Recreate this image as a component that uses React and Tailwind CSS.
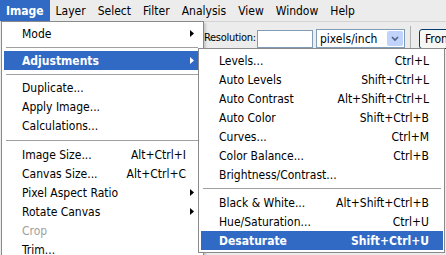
const font = { fontFamily: 'Tahoma, "DejaVu Sans Condensed", "DejaVu Sans", sans-serif' };

const topItems = ['Layer', 'Select', 'Filter', 'Analysis', 'View', 'Window', 'Help'];

function Arrow({ white }) {
  return (
    <svg width="4" height="7" viewBox="0 0 4 7" className="shrink-0 -mr-[8px]">
      <path d="M0 0 L4 3.5 L0 7 Z" fill={white ? '#ffffff' : '#000000'} />
    </svg>
  );
}

function Row({ label, keys, sub, active, disabled }) {
  return (
    <div
      className={`h-[19px] flex items-center pl-[18px] pr-[14px] ${active ? 'bg-[#316ac5] text-white font-bold' : disabled ? 'text-[#a0a0a0]' : 'text-black'}`}
    >
      <span className="flex-1 whitespace-nowrap">{label}</span>
      {keys && <span className="whitespace-nowrap">{keys}</span>}
      {sub && <Arrow white={active} />}
    </div>
  );
}

function Sep({ h = 'h-[8px]' }) {
  return (
    <div className={`${h} flex items-center px-[2px]`}>
      <div className="w-full h-px bg-[#a0a0a0]" />
    </div>
  );
}

export default function App() {
  return (
    <div className="w-[446px] h-[255px] relative overflow-hidden bg-[#ececec] text-[12px]" style={font}>
      {/* menu bar */}
      <div className="h-[21px] flex items-stretch bg-[#ececec]">
        <div className="bg-[#316ac5] text-white font-bold flex items-center px-[6px]">Image</div>
        {topItems.map((t) => (
          <div key={t} className="flex items-center px-[6px] text-black">{t}</div>
        ))}
      </div>

      {/* options toolbar */}
      <div className="h-[34px] flex items-center pl-[204px] border-t border-[#d4d4d4] overflow-hidden">
        <span className="w-[53px] shrink-0 text-black text-[11px] tracking-[-0.3px] whitespace-nowrap">Resolution:</span>
        <div className="w-[56px] h-[18px] shrink-0 bg-white border border-[#7f9db9]" />
        <div className="w-[89px] h-[19px] ml-[3px] shrink-0 bg-white border border-[#7f9db9] flex items-center pl-[3px]">
          <span className="flex-1 text-black whitespace-nowrap">pixels/inch</span>
          <div className="w-[16px] h-[15px] mr-px bg-[#c1d3fb] rounded-[2px] flex items-center justify-center">
            <svg width="8" height="6" viewBox="0 0 8 6">
              <path d="M1 1 L4 4 L7 1" stroke="#4d6185" strokeWidth="1.6" fill="none" />
            </svg>
          </div>
        </div>
        <div className="w-px h-[26px] shrink-0 bg-[#b0b0b0] ml-[5px]" />
        <div className="ml-[8px] h-[20px] shrink-0 px-[5px] border border-[#003c74] rounded-[3px] bg-[#f6f6f2] flex items-center text-black whitespace-nowrap">
          Front Image
        </div>
      </div>

      {/* Image menu */}
      <div className="absolute left-[1px] top-[21px] w-[203px] bg-white border border-[#8a8a8a] py-[2px] pr-[3px] pl-[2px] shadow-[2px_2px_2px_rgba(0,0,0,0.15)]">
        <Row label="Mode" sub />
        <Sep />
        <Row label="Adjustments" sub active />
        <Sep />
        <Row label="Duplicate..." />
        <Row label="Apply Image..." />
        <Row label="Calculations..." />
        <Sep h="h-[10px]" />
        <Row label="Image Size..." keys="Alt+Ctrl+I" />
        <Row label="Canvas Size..." keys="Alt+Ctrl+C" />
        <Row label="Pixel Aspect Ratio" sub />
        <Row label="Rotate Canvas" sub />
        <Row label="Crop" disabled />
        <Row label="Trim..." />
      </div>

      {/* Adjustments submenu */}
      <div className="absolute left-[198px] top-[48px] w-[247px] bg-white border border-[#8a8a8a] py-[2px] pl-[2px] pr-px">
        <Row label="Levels..." keys="Ctrl+L" />
        <Row label="Auto Levels" keys="Shift+Ctrl+L" />
        <Row label="Auto Contrast" keys="Alt+Shift+Ctrl+L" />
        <Row label="Auto Color" keys="Shift+Ctrl+B" />
        <Row label="Curves..." keys="Ctrl+M" />
        <Row label="Color Balance..." keys="Ctrl+B" />
        <Row label="Brightness/Contrast..." />
        <Sep h="h-[9px]" />
        <Row label="Black & White..." keys="Alt+Shift+Ctrl+B" />
        <Row label="Hue/Saturation..." keys="Ctrl+U" />
        <Row label="Desaturate" keys="Shift+Ctrl+U" active />
      </div>
    </div>
  );
}
